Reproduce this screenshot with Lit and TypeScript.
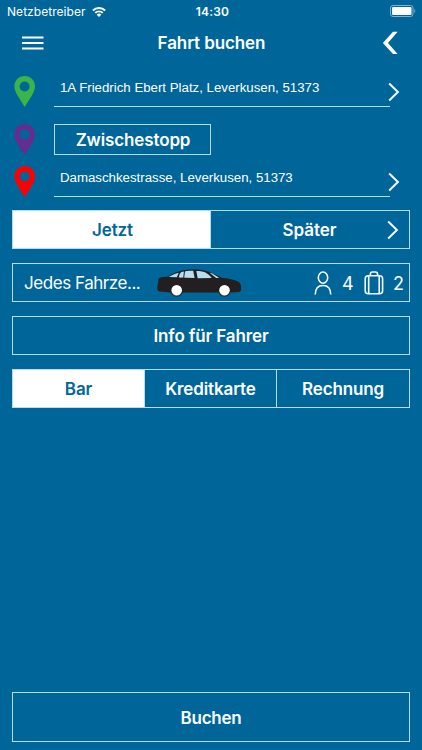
import { LitElement, html, css, svg } from "lit";
import { customElement, property } from "lit/decorators.js";

@customElement("map-pin")
class MapPin extends LitElement {
  @property() color = "#3bb44a";
  static styles = css`
    :host { display: block; width: 21px; height: 31px; }
    svg { display: block; }
  `;
  render() {
    return html`<svg width="21" height="31" viewBox="0 0 21 31">
      <path fill=${this.color} fill-rule="evenodd"
        d="M10.700 0C4.800 0 .4 4.500.4 10.200c0 3.300 1.300 6 3 9L10.700 31l7.300-11.800c1.700-3 3-5.700 3-9C21 4.500 16.600 0 10.700 0Zm-.1 5.500a5 5 0 1 1 0 10 5 5 0 0 1 0-10Z"/>
    </svg>`;
  }
}

@customElement("chevron-icon")
class ChevronIcon extends LitElement {
  static styles = css`
    :host { display: block; width: 12px; height: 20px; }
    svg { display: block; }
  `;
  render() {
    return html`<svg width="12" height="20" viewBox="0 0 12 20">
      <path d="M1.200 1.500 9.900 10 1.200 18.500" fill="none" stroke="#f2fbff" stroke-width="2"/>
    </svg>`;
  }
}

const wifi = svg`
  <path d="M.9 4.500a8.800 8.800 0 0 1 12.200 0" stroke-width="2.100"/>
  <path d="M3.200 6.900a5.500 5.500 0 0 1 7.600 0" stroke-width="2"/>
  <path d="M7 11 4.700 8.800a3.200 3.200 0 0 1 4.600 0Z" fill="#fff" stroke="none"/>`;

@customElement("app-root")
class AppRoot extends LitElement {
  static styles = css`
    :host {
      display: flex; flex-direction: column; box-sizing: border-box;
      width: 422px; height: 750px; background: #006699; color: #fff;
      font-family: Inter, "Liberation Sans", sans-serif; overflow: hidden;
    }
    * { box-sizing: border-box; }
    svg { display: block; }
    .status {
      height: 21px; display: grid; grid-template-columns: 1fr auto 1fr;
      align-items: center; padding: 1px 6px 0 7px; font-size: 12px;
    }
    .carrier { display: flex; align-items: center; gap: 6px; letter-spacing: 0.05px; }
    .time { font-weight: 600; letter-spacing: 0.2px; padding-left: 2px; }
    .battery { justify-self: end; }
    .nav {
      height: 44px; display: grid; grid-template-columns: 60px 1fr 60px;
      align-items: center; padding: 0 23px 0 22px;
    }
    .title { text-align: center; font-size: 17px; font-weight: 600; line-height: 22px; letter-spacing: -0.1px; padding-left: 2px; }
    .back { justify-self: end; }
    .route { display: flex; flex-direction: column; padding: 0 22px 0 14px; }
    .stop { display: flex; align-items: flex-start; }
    .first { height: 59px; padding-top: 11px; }
    .via { height: 42px; }
    .last { height: 44px; }
    .field {
      width: 336px; margin-left: 19px; height: 31px; padding-left: 6px;
      border-bottom: 1px solid #b5dcef;
      font: 13.250px/23px "Liberation Sans", sans-serif; white-space: nowrap;
    }
    .go { margin: 6px 0 0 -2px; }
    .box, .segments { border: 1px solid #b5dcef; }
    .box {
      display: flex; align-items: center; justify-content: center;
      font-size: 17px; font-weight: 600; white-space: nowrap; letter-spacing: -0.13px;
    }
    .stopover { width: 157px; height: 31px; margin-left: 19px; padding-left: 1px; }
    .main { display: flex; flex-direction: column; flex: 1; padding: 0 12px 8px; }
    .segments { display: grid; font-size: 17px; font-weight: 600; letter-spacing: -0.13px; }
    .two { grid-template-columns: 197px 1fr; height: 39px; }
    .two .on { padding-left: 2px; }
    .three { grid-template-columns: 131px 132px 1fr; height: 39px; margin-top: 14px; }
    .seg { display: flex; align-items: center; justify-content: center; }
    .seg + .seg { border-left: 1px solid #b5dcef; }
    .seg > span, .info > span, .book > span { padding-top: 1px; }
    .on { background: #fff; color: #006699; }
    .later { display: grid; grid-template-columns: 1fr auto 1fr; padding: 0 10px 0 9px; }
    .later .text { grid-column: 2; letter-spacing: 0; }
    .later chevron-icon { justify-self: end; }
    .vehicle {
      justify-content: flex-start; height: 39px; margin-top: 14px;
      padding: 0 5px 0 11px; font-weight: 400; letter-spacing: 0;
    }
    .name { width: 133px; letter-spacing: -0.45px; padding-top: 1px; }
    .person { margin-left: 72px; }
    .seats { margin-left: 10px; width: 12px; font-size: 18px; padding-top: 1px; }
    .case { margin-left: 10px; }
    .bags { margin-left: 9px; font-size: 18px; padding-top: 1px; }
    .info { height: 39px; margin-top: 14px; }
    .book { height: 50px; margin-top: auto; letter-spacing: -0.25px; }
  `;

  render() {
    return html`
      <div class="status">
        <div class="carrier"><span>Netzbetreiber</span>
          <svg width="14" height="11" viewBox="0 0 14 11" fill="none" stroke="#fff">${wifi}</svg>
        </div>
        <span class="time">14:30</span>
        <svg class="battery" width="26" height="12" viewBox="0 0 26 12">
          <rect x=".5" y=".5" width="22.500" height="11" rx="2.500" fill="none" stroke="#7fb2cc"/>
          <rect x="2" y="2" width="19.500" height="8" rx="1.200" fill="#fff"/>
          <path d="M24.300 4v4c1.300-.5 1.300-3.500 0-4Z" fill="#7fb2cc"/>
        </svg>
      </div>
      <div class="nav">
        <svg width="22" height="14" viewBox="0 0 22 14"><path d="M0 1.500h21.500M0 7h21.500M0 12.500h21.500" stroke="#fff" stroke-width="2"/></svg>
        <div class="title"><span>Fahrt buchen</span></div>
        <svg class="back" width="17" height="24" viewBox="0 0 17 24"><path d="M11 .8h4.600L6 11.900l9.600 11.200H11L.9 11.900Z" fill="#fff"/></svg>
      </div>
      <div class="route">
        <div class="stop first">
          <map-pin color="#3bb44a"></map-pin>
          <div class="field"><span>1A Friedrich Ebert Platz, Leverkusen, 51373</span></div>
          <chevron-icon class="go"></chevron-icon>
        </div>
        <div class="stop via">
          <map-pin color="#662d91"></map-pin>
          <div class="box stopover"><span>Zwischestopp</span></div>
        </div>
        <div class="stop last">
          <map-pin color="#ff0000"></map-pin>
          <div class="field"><span>Damaschkestrasse, Leverkusen, 51373</span></div>
          <chevron-icon class="go"></chevron-icon>
        </div>
      </div>
      <div class="main">
        <div class="segments two">
          <div class="seg on"><span>Jetzt</span></div>
          <div class="seg later"><span class="text">Später</span><chevron-icon></chevron-icon></div>
        </div>
        <div class="box vehicle">
          <span class="name">Jedes Fahrze...</span>
          <svg width="85" height="28" viewBox="0 0 85 28">
            <path fill="#231f20" d="M1.500 10.500C2 9 3 8.400 4.700 8.200l6.600-.6C15 5 19 3 23 1.900 27.500.7 32 .4 36.300.4c6 0 11 .6 15 2.100 4.700 1.700 9 4 13.400 6.300 6 .6 11.500 1.500 15.600 3.400 2.500 1.200 3.700 2.800 3.700 4.800l.2 3.500c-.2 1.400-1.200 2.200-2.600 2.400l-8 .6H14L3 22.500C1.300 22.300.4 21.500.4 20v-3.500L1 15Z"/>
            <path fill="#b9dcee" d="M11.800 8c3-2 6.300-3.600 10-4.300l-2 4.500Zm10 .6c.3-2.300 1.200-4.300 2.600-5.500 3.500-1 7.500-1.300 11.800-1.300l1.400 7.200ZM39.300 2c3.200 0 6.200.4 8.700 1.300 2.700 1.400 5 3.300 6.700 5.800l-14 .1Zm13.200 1.800 2.700.8 7 4.200-3 .1Z"/>
            <path stroke="#231f20" d="m27.500 2-.8 7"/>
            <circle cx="19.700" cy="21.300" r="6.300" fill="#231f20"/><circle cx="67.500" cy="21.300" r="6.300" fill="#231f20"/>
            <circle cx="19.700" cy="21.300" r="5.300" fill="#fff"/><circle cx="67.500" cy="21.300" r="5.300" fill="#fff"/>
          </svg>
          <svg class="person" width="18" height="24" viewBox="0 0 18 24" fill="none" stroke="#f2fbff" stroke-width="1.600">
            <ellipse cx="9" cy="6.600" rx="4.700" ry="5.600"/>
            <path d="M1.300 23.500c0-5.500 2.700-9 7.700-9s7.700 3.500 7.700 9"/>
          </svg>
          <span class="seats">4</span>
          <svg class="case" width="20" height="24" viewBox="0 0 20 24" fill="none" stroke="#f2fbff" stroke-width="1.600">
            <rect x="1.200" y="4.800" width="17.400" height="18" rx="3"/>
            <path d="M4.700 4.800v18M15.200 4.800v18M6.300 4.800V3.500c0-1.600.9-2.500 2.200-2.500h2.900c1.300 0 2.200.9 2.200 2.500v1.300"/>
          </svg>
          <span class="bags">2</span>
        </div>
        <div class="box info"><span>Info für Fahrer</span></div>
        <div class="segments three">
          <div class="seg on"><span>Bar</span></div>
          <div class="seg"><span>Kreditkarte</span></div>
          <div class="seg"><span>Rechnung</span></div>
        </div>
        <div class="box book"><span>Buchen</span></div>
      </div>
    `;
  }
}
